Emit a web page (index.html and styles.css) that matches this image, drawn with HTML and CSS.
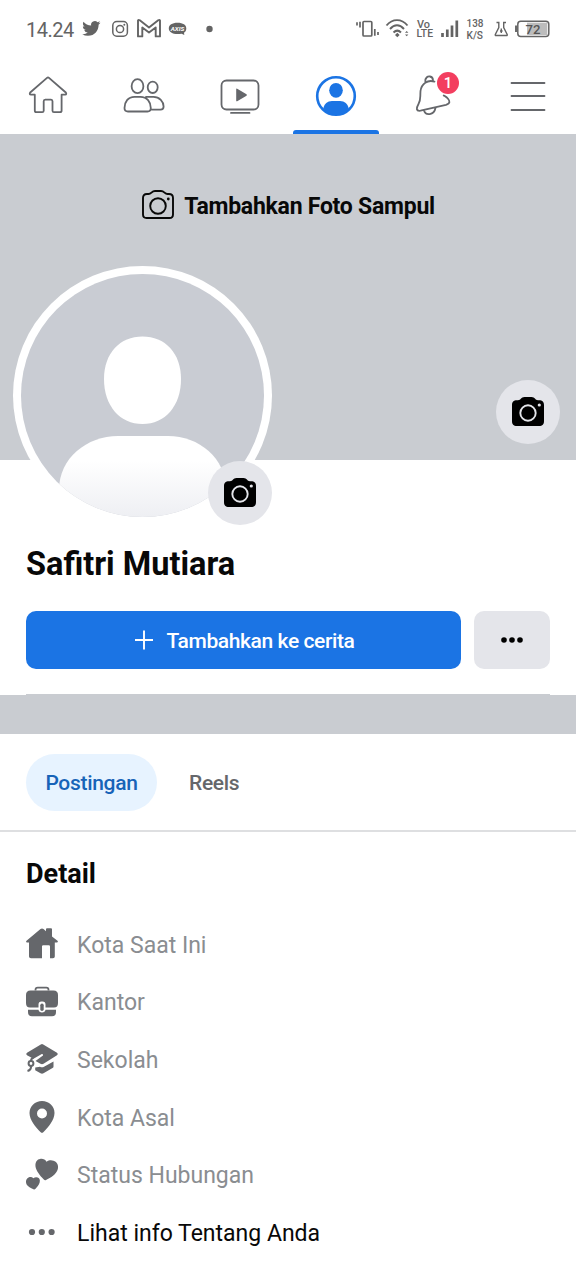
FILE: index.html
```html
<!DOCTYPE html>
<html lang="id">
<head>
<meta charset="utf-8">
<title>Safitri Mutiara</title>
<link rel="stylesheet" href="styles.css">
</head>
<body>
<svg class="defs" width="0" height="0">
  <defs>
    <g id="camera">
      <path d="M5 3.200H6C9 3.200 9 0 12.500 0H19.500C23 0 23 3.200 26 3.200H27C30.500 3.200 32 5 32 8V24C32 27.500 30.500 29 27 29H5C1.500 29 0 27.500 0 24V8C0 5 1.500 3.200 5 3.200Z"/>
      <circle cx="16" cy="16" r="7.700" fill="none" stroke="#e4e5ea" stroke-width="1.900"/>
      <circle cx="27.300" cy="8" r="1.600" fill="#e4e5ea"/>
    </g>
    <linearGradient id="shirt" x1="0" y1="0" x2="0" y2="1">
      <stop offset="0.300" stop-color="#fff"/>
      <stop offset="1" stop-color="#eeeff3"/>
    </linearGradient>
    <clipPath id="portrait"><circle cx="121.500" cy="121.500" r="121.500"/></clipPath>
  </defs>
</svg>
<header class="status">
  <span class="clock">14.24</span>
  <svg class="status-left" width="140" height="58" viewBox="78 0 140 58">
    <path fill="#646464" transform="translate(82.200 19.300) scale(.76)" d="M23.950 4.570a10 10 0 0 1-2.820.770 4.960 4.960 0 0 0 2.160-2.720c-.950.550-2 .950-3.130 1.180a4.920 4.920 0 0 0-8.380 4.480C7.690 8.090 4.070 6.130 1.640 3.160a4.820 4.820 0 0 0-.670 2.480c0 1.710.870 3.210 2.190 4.100a4.900 4.900 0 0 1-2.230-.620v.060a4.920 4.920 0 0 0 3.950 4.830 5 5 0 0 1-2.210.080 4.940 4.940 0 0 0 4.600 3.420A9.870 9.870 0 0 1 0 19.540a13.990 13.990 0 0 0 7.550 2.210c9.050 0 14-7.500 14-13.980 0-.210 0-.420-.020-.630a9.940 9.940 0 0 0 2.420-2.570z"/>
    <g fill="none" stroke="#646464" stroke-width="1.500"><rect x="112.800" y="21.600" width="14.600" height="14.600" rx="4"/><circle cx="120" cy="29" r="3.600"/></g>
    <circle cx="124.300" cy="24.800" r="1" fill="#646464"/>
    <path d="M138 36.400V20.500Q138.200 19.300 139.800 20.300L149 27.400L158.200 20.300Q159.800 19.300 160 20.500V36.400H155.700V27.500L149 32.600L142.300 27.500V36.400Z" fill="none" stroke="#646464" stroke-width="1.900" stroke-linejoin="round"/>
    <path d="M177.500 22.800C183 22.800 186.300 25 186.300 28.500C186.300 30.600 185.200 32 184 32.800L184.300 35L181.600 33.700C174 35 168.800 32.500 168.800 28.500C168.800 25 172.200 22.800 177.500 22.800Z" fill="#646464"/>
    <text class="axis" x="170.700" y="31" textLength="13.600" lengthAdjust="spacingAndGlyphs">AXIS</text>
    <circle cx="209.500" cy="29" r="3.200" fill="#646464"/>
  </svg>
  <svg class="status-right" width="200" height="58" viewBox="352 0 200 58">
    <g fill="none" stroke="#646464" stroke-width="1.700">
      <rect x="363" y="21.500" width="8.800" height="14.500" rx="1"/>
      <path d="M360 21.700V27.500M357 22.300V25.500M374.800 29V35.800M378 32V35"/>
      <path d="M386.500 25.500C392.500 18.300 401.500 18.300 407.500 25.500M390 29C394.500 24 399.500 24 404 29M393.500 32.500C396 30 398.500 30 401 32.500" stroke-width="1.900"/>
    </g>
    <path d="M395 35L397.300 32.800L399.600 35L397.300 37.300ZM405 32.800L406.700 31L408.400 32.800ZM405 34.500L406.700 36.300L408.400 34.500Z" fill="#646464"/>
    <g class="tiny">
      <text x="417" y="27.500" textLength="13" lengthAdjust="spacingAndGlyphs">Vo</text>
      <text x="416.500" y="37.300" textLength="16.500" lengthAdjust="spacingAndGlyphs">LTE</text>
      <text class="thin" x="466.500" y="27" textLength="17" lengthAdjust="spacingAndGlyphs">138</text>
      <text class="thin" x="466.500" y="39" textLength="16.500" lengthAdjust="spacingAndGlyphs">K/S</text>
    </g>
    <path d="M442.500 33V37M447.300 29.500V37M452 25.500V37M456.800 20.500V37" stroke="#646464" stroke-width="2.700" fill="none"/>
    <path d="M496.500 22.500H498.800V27.500L495.300 34.500Q495 35.500 496 35.500H506.500Q507.500 35.500 507.200 34.500L503.700 27.500V22.500H506M501.300 28.500V33M500 31H502.600" fill="none" stroke="#646464" stroke-width="1.400"/>
    <rect x="527" y="22.700" width="20.300" height="12.300" fill="#bcbcbc"/>
    <rect x="517.800" y="21.200" width="31" height="15.300" rx="3" fill="none" stroke="#646464" stroke-width="1.500"/>
    <path d="M516 25.500V32" stroke="#646464" stroke-width="1.900"/>
    <text class="battery" x="525.500" y="33.700" textLength="15" lengthAdjust="spacingAndGlyphs">72</text>
  </svg>
</header>

<nav class="nav">
  <a class="tab"><svg viewBox="0 0 96 76"><path d="M47 19.900Q48 19 49 19.900L65.800 34.500Q67 36.600 65.200 36.700H61.600V52.500Q61.600 54.200 60 54.200H54Q52.500 54.200 52.500 52.700V43.300Q52.500 41.700 51 41.700H45.200Q43.700 41.700 43.700 43.300V52.700Q43.700 54.200 42.200 54.200H36.300Q34.800 54.200 34.800 52.500V36.700H31Q29 36.600 30.200 34.500Z"/></svg></a>
  <a class="tab"><svg viewBox="0 0 96 76"><ellipse cx="41.500" cy="28.200" rx="5.900" ry="7"/><ellipse cx="56.700" cy="29.300" rx="5" ry="5.700"/><path d="M38.500 38.800H44.500C51 38.800 54.800 44 54.800 50C54.800 52.500 54 53.500 51.500 53.500H32C29.300 53.500 28.500 52.500 28.500 50C28.500 44 32 38.800 38.500 38.800ZM50 38.800H57.500C63.500 38.800 67.600 43.500 67.600 48.500C67.600 51 66.700 51.700 64.500 51.700H54.800"/></svg></a>
  <a class="tab"><svg viewBox="0 0 96 76"><rect x="29.500" y="22.500" width="37" height="29" rx="5"/><path d="M39 54.900H57.500"/><path class="solid" d="M44.200 31.200Q44.200 30.200 45.200 30.800L54.500 36.300Q55.300 37 54.500 37.700L45.200 43.200Q44.200 43.700 44.200 42.700Z"/></svg></a>
  <a class="tab active"><svg viewBox="0 0 96 76"><circle cx="48" cy="38" r="18.800"/><ellipse class="solid" cx="48" cy="32.300" rx="6.800" ry="7.400"/><path class="solid" d="M35.300 50.500C36 46 39.500 43 44 43H52C56.500 43 60 46 60.700 50.500C57.500 54.500 53 57 48 57S38.500 54.500 35.300 50.500Z"/></svg></a>
  <a class="tab"><svg viewBox="0 0 96 76"><path d="M41.300 23.500C41 20 43.500 18 46 18.500C48 18.900 49 20.500 49 22.500M50.500 23.600C43.500 21.500 37.500 25.500 36.500 33C36 40 37 42 34.500 46C32 50.500 32 53.300 36.500 52.700L62 46.800C66.500 45.500 66 43 63.800 40.500C62.500 39 61 38.300 59.700 37.400M40 52.600C41.500 57.800 50 57.500 51.500 50"/></svg><span class="badge">1</span></a>
  <a class="tab"><svg viewBox="0 0 96 76"><path d="M31.500 25H64.500M31.500 38H64.500M31.500 52H64.500"/></svg></a>
</nav>

<section class="cover">
  <div class="add-cover">
    <svg width="34" height="30" viewBox="-1 0 34 30" fill="none" stroke="#080808" stroke-width="1.900"><path d="M5 4H6.500C9.500 4 9.500 1 13 1H19C22.500 1 22.500 4 25.500 4H27C30 4 31 5.500 31 8V24.500C31 27 30 28 27.500 28H4.500C2 28 1 27 1 24.500V8C1 5.500 2 4 5 4Z"/><circle cx="16" cy="16" r="7.800"/><circle cx="26.300" cy="9" r="1.400" fill="#080808" stroke="none"/></svg>
    <span>Tambahkan Foto Sampul</span>
  </div>
  <div class="avatar">
    <svg width="243" height="243" viewBox="0 0 243 243"><g clip-path="url(#portrait)"><rect width="243" height="243" fill="#c9ccd3"/><path d="M121.500 62.500C144 62.500 160 79 160 105C160 132 144 150 121.500 150S83 132 83 105C83 79 99 62.500 121.500 62.500Z" fill="#fff"/><path d="M97 162H147C178 162 205 184 205 216V243H38V216C38 184 66 162 97 162Z" fill="url(#shirt)"/></g></svg>
  </div>
  <div class="round avatar-camera"><svg width="32" height="29"><use href="#camera"/></svg></div>
  <div class="round cover-camera"><svg width="32" height="29"><use href="#camera"/></svg></div>
</section>

<section class="profile">
  <h1 class="name">Safitri Mutiara</h1>
  <div class="actions">
    <button class="story"><svg width="18" height="20" viewBox="0 0 18 20"><path d="M0 10H18M9 .5V19.500" stroke="#fff" stroke-width="1.900"/></svg><span>Tambahkan ke cerita</span></button>
    <button class="more"><svg width="22" height="6" viewBox="0 0 22 6"><circle cx="3" cy="3" r="2.800"/><circle cx="11" cy="3" r="2.800"/><circle cx="19" cy="3" r="2.800"/></svg></button>
  </div>
  <div class="rule"></div>
</section>
<div class="band"></div>

<div class="filters"><span class="pill">Postingan</span><span class="reels">Reels</span></div>

<section class="detail">
  <h2 class="heading">Detail</h2>
  <ul class="list">
    <li class="row"><svg viewBox="0 0 32 32"><path d="M14.500 1Q16 0 17.500 1L20 3.200V1.300Q20 .3 21 .3H25Q26 .3 26 1.300V8.500L31.500 12.800Q32.500 14.300 30.800 14.500H28.800V28.500Q28.800 30.300 27 30.300H24V18.500Q24 17.300 22.800 17.300H17.200Q16 17.300 16 18.500V30.300H5Q3 30.300 3 28.500V14.500H1Q-.5 14.300 .5 12.800Z"/></svg><span>Kota Saat Ini</span></li>
    <li class="row"><svg viewBox="0 0 32 32"><path d="M9.500 5.500V4.800Q9.500 2.600 11.700 2.600H20.300Q22.500 2.600 22.500 4.800V5.500" fill="none" stroke="#65676b" stroke-width="1.800"/><path d="M4.500 5.500H27.500Q32 5.500 32 10V18Q32 22.500 28 22.500H19.500V19.500Q19.500 16.500 16.500 16.500H15.500Q12.500 16.500 12.500 19.500V22.500H4Q0 22.500 0 18V10Q0 5.500 4.500 5.500ZM2 24.800H12.500Q13 27.500 16 27.500T19.500 24.800H30V27Q30 31.300 26 31.300H6Q2 31.300 2 27Z"/><rect x="14.300" y="18.500" width="3.400" height="7.400" rx="1.700"/></svg><span>Kantor</span></li>
    <li class="row"><svg viewBox="0 0 32 32"><path d="M14.800 1.500Q16 .7 17.200 1.500L31 9.700Q32.500 11 31 12.200L17.500 20.800Q16 21.500 14.500 20.800L9.500 18L17 12.500Q17.500 11 15.800 11L7.500 15.700L1 12.200Q-.5 11 1 9.700ZM9.200 24.500L14 23.800Q16 24.800 18 23.800L27.500 18.500V23.500Q27.500 24.500 26.500 25L17.500 30.300Q16 31 14.500 30.300L9.200 27.300Z"/><path d="M7.500 14.500C5 15.700 5 16.500 5 18M5 22.500Q5.500 27 1.500 28" fill="none" stroke="#65676b" stroke-width="2"/><circle cx="5" cy="20.500" r="2.400" fill="#fff" stroke="#65676b" stroke-width="2"/></svg><span>Sekolah</span></li>
    <li class="row"><svg viewBox="0 0 32 32"><path fill-rule="evenodd" d="M16 0C23 0 28.500 5 28.500 12C28.500 19 22.500 26 17.300 31.200Q16 32.500 14.700 31.200C9.500 26 3.500 19 3.500 12C3.500 5 9 0 16 0ZM16 7.500A5 5 0 1 0 16 17.500A5 5 0 1 0 16 7.500Z"/></svg><span>Kota Asal</span></li>
    <li class="row"><svg viewBox="0 0 32 32"><path d="M20.500 3.700C23 2 25.500 2 27.500 2.800C31.500 4 33 8 31.500 12C30 16.500 25 19.500 20 22Q18.800 22.700 17.800 21.500C13.500 17 10 12.500 9.500 8.500C9 4.500 11 1.300 14 1C17 .5 19 1.500 20.500 3.700ZM7.300 20.200C9 18.800 11.500 18.800 13 20.200C15 22.500 13.500 27 9.300 31Q8.500 31.700 7.500 31.200C3 29.500 0 27 0 24C0 19.500 5 17.800 7.300 20.200Z"/></svg><span>Status Hubungan</span></li>
    <li class="row strong"><svg viewBox="0 0 32 32"><circle cx="6" cy="16" r="3.100"/><circle cx="15.800" cy="16" r="3.100"/><circle cx="25.600" cy="16" r="3.100"/></svg><span>Lihat info Tentang Anda</span></li>
  </ul>
</section>
</body>
</html>
```
FILE: styles.css
```css
* { box-sizing: border-box; }
body { margin: 0; width: 576px; height: 1280px; overflow: hidden; background: #fff; color: #080808; font-family: Roboto, sans-serif; }
svg { display: block; flex: none; }
.defs { position: absolute; }
.status { height: 58px; display: flex; align-items: center; padding: 0 24px 0 26px; color: #646464; }
.clock { width: 52px; padding-top: 1px; font-size: 20px; font-weight: 400; letter-spacing: -.5px; line-height: 24px; white-space: nowrap; }
.status-right { margin-left: auto; }
.axis { font: italic 700 6px Roboto, sans-serif; fill: #fff; }
.tiny { font: 500 10px/1 Roboto, sans-serif; fill: #646464; }
.thin { font-size: 10px; }
.battery { font: 500 13px Roboto, sans-serif; fill: #555; }
.nav { display: grid; grid-template-columns: repeat(6, 96px); height: 76px; }
.tab { position: relative; height: 76px; }
.tab svg { width: 96px; height: 76px; fill: none; stroke: #65676b; stroke-width: 1.8; stroke-linecap: round; stroke-linejoin: round; }
.tab .solid { fill: #65676b; stroke: none; }
.active svg { stroke: #1b74e4; stroke-width: 2.6; }
.active .solid { fill: #1b74e4; }
.active::after { content: ""; position: absolute; left: 5px; bottom: 0; width: 86px; height: 4px; border-radius: 3px 3px 0 0; background: #1b74e4; }
.badge { position: absolute; left: 53px; top: 14px; width: 22px; height: 22px; border-radius: 50%; background: #f33e5f; color: #fff; font-size: 15px; font-weight: 500; line-height: 22px; text-align: center; }
.cover { position: relative; height: 326px; padding-top: 56px; background: #c9ccd1; }
.add-cover { display: flex; align-items: center; justify-content: center; gap: 9px; height: 30px; font-size: 23px; font-weight: 700; letter-spacing: -.25px; white-space: nowrap; }
.add-cover span { padding-top: 3px; }
.avatar { position: absolute; left: 13px; top: 131.5px; width: 259px; height: 259px; padding: 8px; border-radius: 50%; background: #fff; }
.round { position: absolute; width: 64px; height: 64px; padding-bottom: 2px; border-radius: 50%; background: #e4e5ea; display: grid; place-items: center; }
.avatar-camera { left: 208px; top: 327px; }
.cover-camera { left: 496px; top: 246px; }
.profile { height: 235px; padding: 84px 26px 0; display: flex; flex-direction: column; }
.name { margin: 0; font-size: 32.5px; line-height: 40px; font-weight: 700; white-space: nowrap; }
.actions { display: flex; gap: 13px; margin-top: 27px; height: 58px; }
.story, .more { border: 0; padding: 0; border-radius: 10px; display: flex; align-items: center; justify-content: center; font-family: inherit; }
.story { flex: 1; gap: 14px; padding-left: 2px; background: #1b74e4; color: #fff; font-size: 21px; font-weight: 500; letter-spacing: -.4px; }
.story span { padding-top: 1px; }
.more { width: 76px; background: #e4e5ea; }
.rule { margin-top: auto; height: 1px; background: #c9ccd1; }
.band { height: 39px; background: #c9ccd1; }
.filters { height: 98px; display: flex; align-items: center; padding: 1px 26px 0; gap: 32px; border-bottom: 2px solid #dedfe1; font-size: 21px; font-weight: 500; letter-spacing: -.3px; }
.pill { display: flex; align-items: center; justify-content: center; width: 131px; height: 57px; border-radius: 29px; background: #e7f3ff; color: #1763b8; }
.reels { color: #65676b; }
.detail { padding: 24px 26px 0; }
.heading { margin: 0; padding-top: 1px; font-size: 27px; line-height: 35px; font-weight: 700; }
.list { list-style: none; margin: 23px 0 0; padding: 0; }
.row { display: flex; align-items: center; gap: 19px; height: 57.6px; font-size: 23px; color: #8a8d91; white-space: nowrap; }
.row span { padding-top: 3px; }
.row svg { width: 32px; height: 32px; fill: #65676b; }
.strong { color: #080808; }
```
